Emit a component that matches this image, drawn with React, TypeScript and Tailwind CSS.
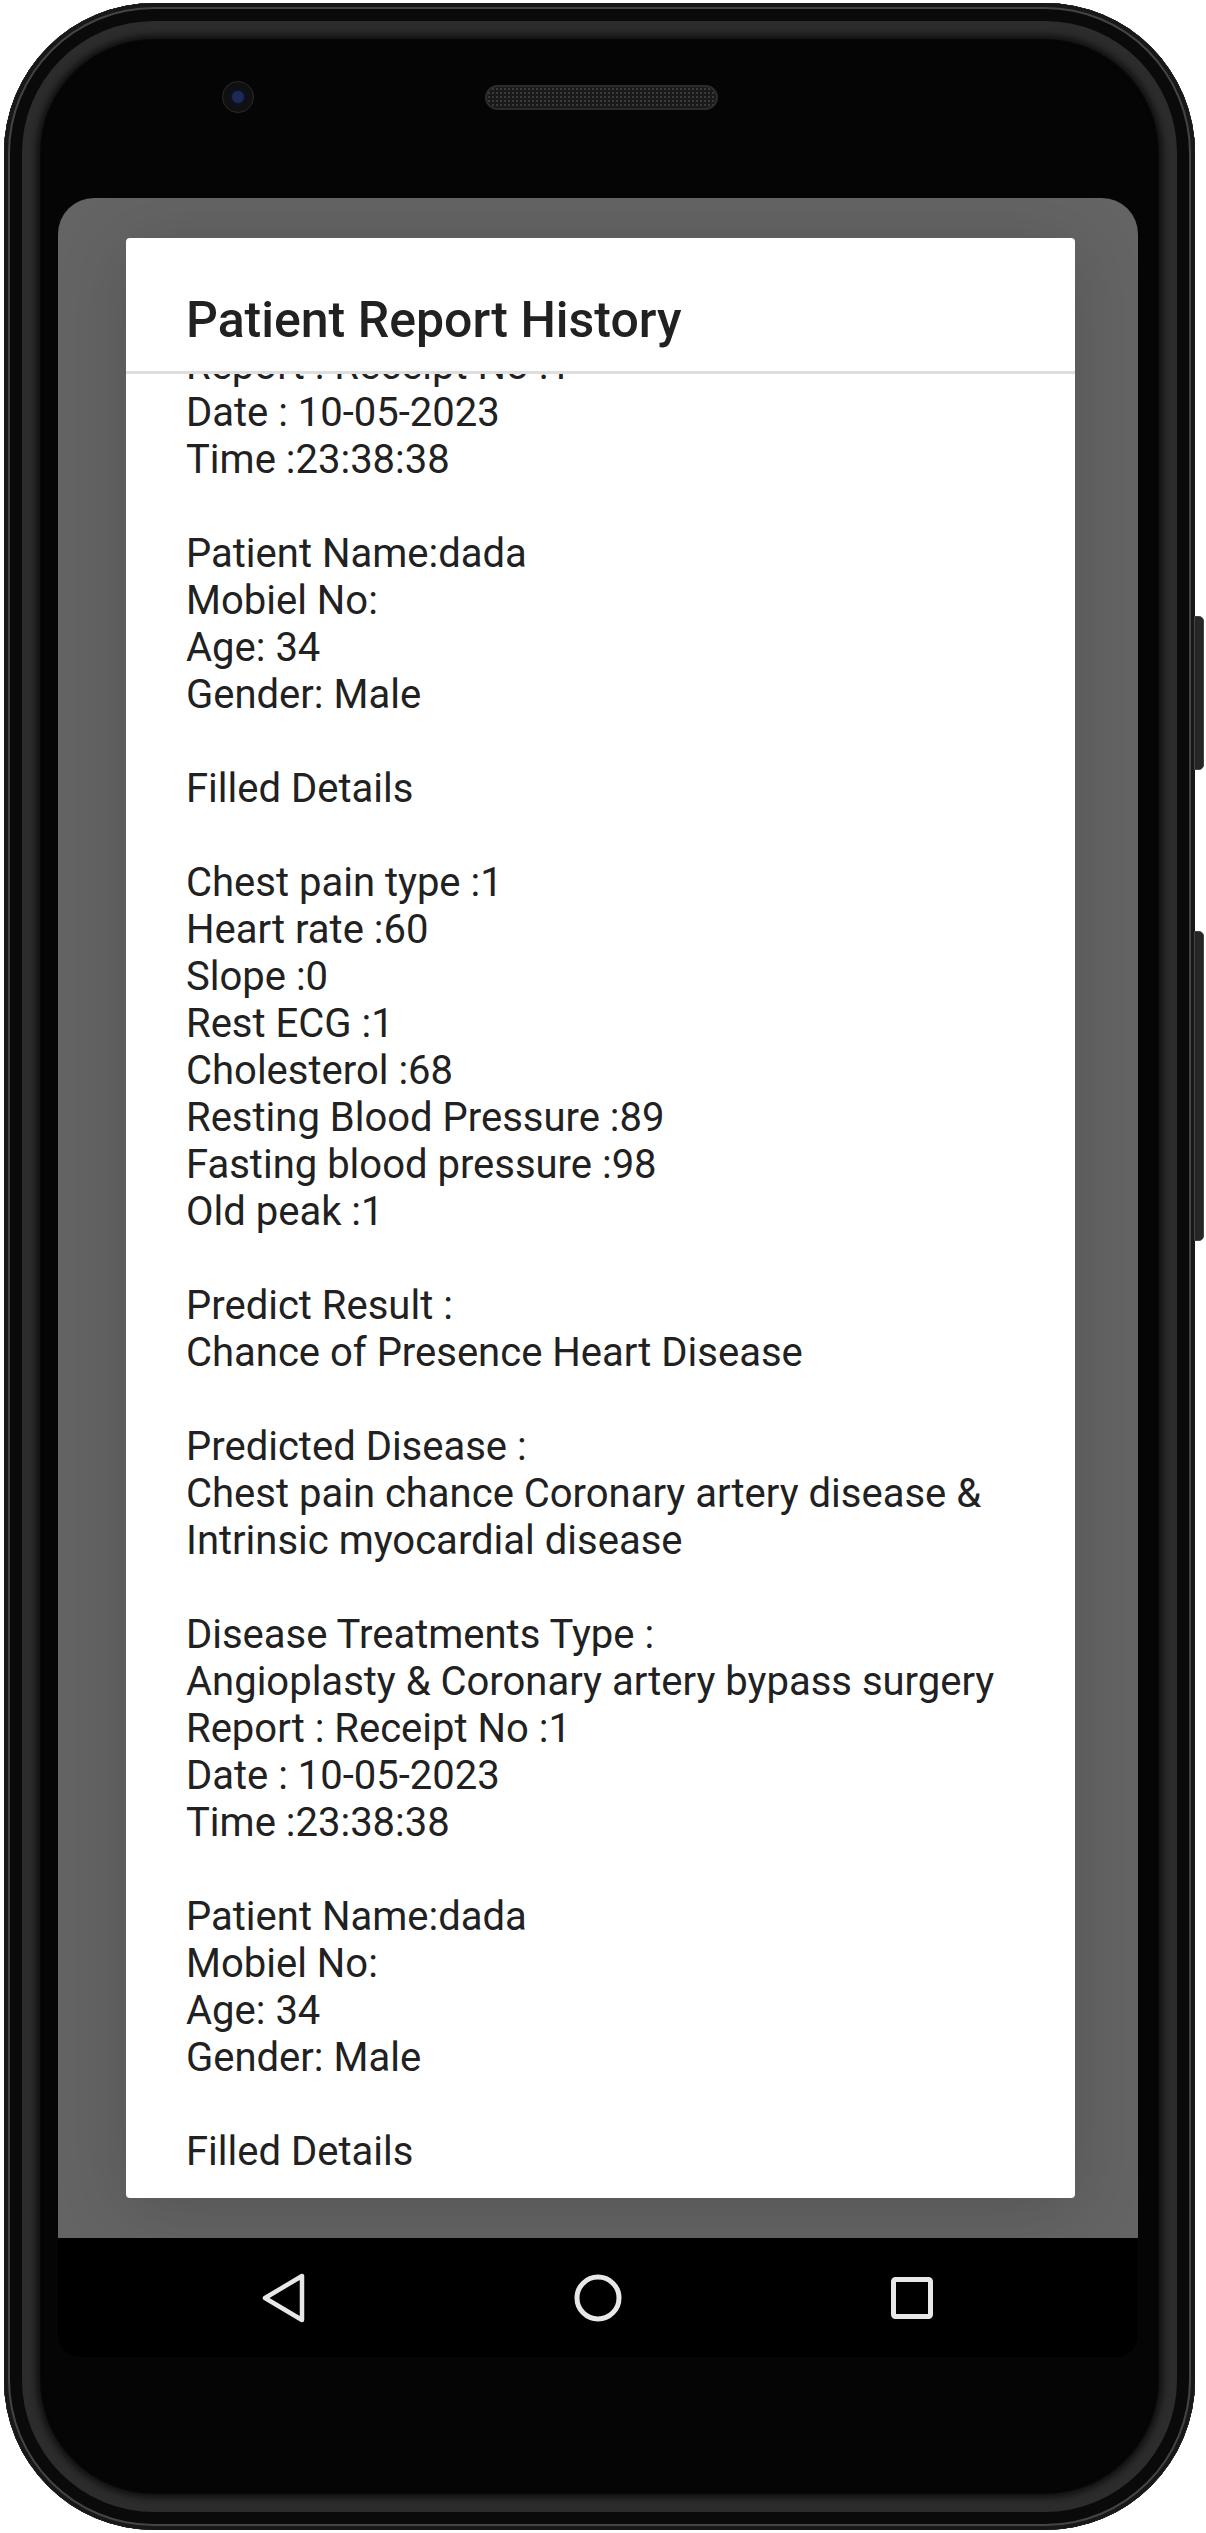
import React from 'react';

// one report record, as the dialog's TextView prints it
const record: string[] = [
  'Report : Receipt No :1',
  'Date : 10-05-2023',
  'Time :23:38:38',
  '',
  'Patient Name:dada',
  'Mobiel No:',
  'Age: 34',
  'Gender: Male',
  '',
  'Filled Details',
  '',
  'Chest pain type :1',
  'Heart rate :60',
  'Slope :0',
  'Rest ECG :1',
  'Cholesterol :68',
  'Resting Blood Pressure :89',
  'Fasting blood pressure :98',
  'Old peak :1',
  '',
  'Predict Result :',
  'Chance of Presence Heart Disease',
  '',
  'Predicted Disease :',
  'Chest pain chance Coronary artery disease &',
  'Intrinsic myocardial disease',
  '',
  'Disease Treatments Type :',
  'Angioplasty & Coronary artery bypass surgery',
];

const lines = [...record, ...record];

const NavBar = () => (
  <div className="h-[119px] bg-black flex items-center justify-center gap-[214px]">
    <div className="w-[100px] flex justify-center">
      <svg width="48" height="50" viewBox="0 0 48 50" fill="none">
        <path d="M42 3 V47 L5 25 Z" stroke="#e8e8e8" strokeWidth="4.5" strokeLinejoin="round" />
      </svg>
    </div>
    <div className="w-[100px] flex justify-center">
      <svg width="50" height="50" viewBox="0 0 50 50" fill="none">
        <circle cx="25" cy="25" r="21" stroke="#e8e8e8" strokeWidth="5" />
      </svg>
    </div>
    <div className="w-[100px] flex justify-center">
      <svg width="46" height="46" viewBox="0 0 46 46" fill="none">
        <rect x="4.5" y="4.5" width="37" height="37" rx="2" stroke="#e8e8e8" strokeWidth="5" />
      </svg>
    </div>
  </div>
);

export default function App() {
  return (
    <div className="w-[1206px] h-[2533px] bg-white pt-[3px] pl-[4px] font-[Roboto,sans-serif]">
      <div className="relative w-[1191px] h-[2527px] rounded-[150px] bg-[#050505] shadow-[inset_0_0_0_4px_#181818,inset_0_0_0_6px_#444,inset_0_0_0_18px_#0a0a0a,inset_0_0_6px_32px_#2c2c2c,inset_0_0_0_36px_#111]">
        {/* side buttons */}
        <div className="absolute right-[-9px] top-[613px] w-[10px] h-[154px] rounded-r-[5px] bg-[#262626] border border-[#444]" />
        <div className="absolute right-[-9px] top-[928px] w-[10px] h-[310px] rounded-r-[5px] bg-[#262626] border border-[#444]" />

        {/* camera + speaker */}
        <div className="h-[195px] flex items-start">
          <div className="ml-[218px] mt-[78px] w-[32px] h-[32px] rounded-full bg-[#101010] border border-[#2a2a2a] flex items-center justify-center">
            <div className="w-[16px] h-[16px] rounded-full bg-[#1c2a55] border-2 border-[#0c1330]" />
          </div>
          <div className="ml-[231px] mt-[82px] w-[233px] h-[25px] rounded-full bg-[#1a1a1a] border-2 border-[#2c2c2c] bg-[radial-gradient(#3a3a3a_1px,transparent_1px)] bg-[length:4px_4px]" />
        </div>

        {/* screen */}
        <div className="ml-[54px] w-[1080px] h-[2159px] rounded-t-[36px] rounded-b-[22px] overflow-hidden flex flex-col">
          <div className="h-[2040px] bg-[#646464] pt-[40px] pl-[68px]">
            <div className="w-[949px] h-[1960px] bg-white rounded-[4px] shadow-[0_10px_70px_rgba(0,0,0,0.16)] flex flex-col overflow-hidden">
              <div className="pt-[54px] pb-[23px] pl-[60px] text-[50px] leading-[56px] font-medium text-[#212121]">
                Patient Report History
              </div>
              <div className="h-[3px] bg-[#dedede]" />
              <div className="flex-1 overflow-hidden pl-[60px]">
                <div className="-mt-[32px] text-[40px] leading-[47px] text-[#212121] whitespace-nowrap">
                  {lines.map((t, i) => (
                    <div key={i} className="h-[47px]">{t}</div>
                  ))}
                </div>
              </div>
            </div>
          </div>
          <NavBar />
        </div>
      </div>
    </div>
  );
}
